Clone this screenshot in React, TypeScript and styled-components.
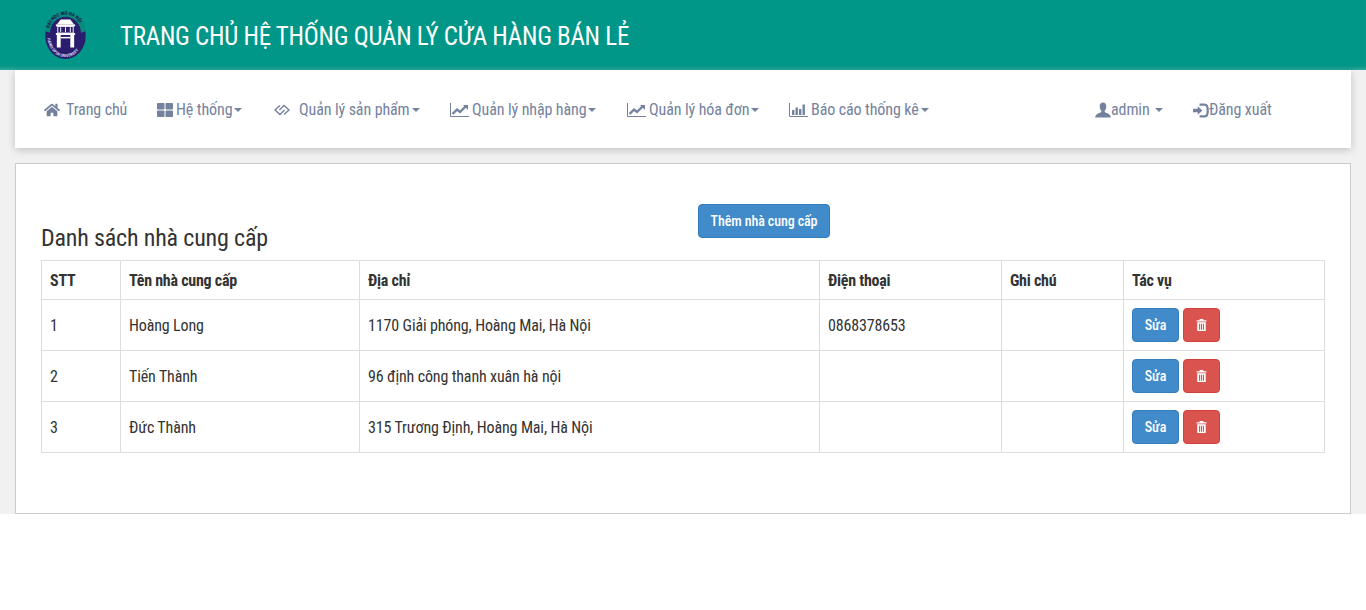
import React from 'react';
import styled, {createGlobalStyle} from 'styled-components';
import {FaHome, FaThLarge} from 'react-icons/fa';

const GlobalStyle = createGlobalStyle`
  html, body {
    margin: 0;
    padding: 0;
    background: #fff;
  }
  body {
    font-family: "Roboto Condensed", Roboto, "Liberation Sans", sans-serif;
    font-stretch: 75%;
    font-size: 16px;
    color: #333;
  }
  * {
    box-sizing: border-box;
  }
`;

function Logo() {
  return (
    <LogoSvg viewBox="0 0 44 52">
      <defs>
        <path id="ring-top" d="M5 22 A17 17 0 0 1 39 22"/>
        <path id="ring-bottom" d="M3 26 C3 40 12 49 22 49 C32 49 41 40 41 26"/>
      </defs>
      <ellipse cx="22" cy="27" rx="21" ry="24" fill="#2a1d6e"/>
      <path d="M1 22 C2 10 10 2 22 2 C34 2 42 10 43 22 L37 24 L7 24 Z" fill="#0b8a7c"/>
      <text fontSize="5" fontWeight="700" fill="#1c1450" fontFamily="Roboto, sans-serif">
        <textPath href="#ring-top" startOffset="6%">ĐẠI HỌC MỞ HÀ NỘI</textPath>
      </text>
      <ellipse cx="22" cy="24" rx="16" ry="17" fill="#2a1d6e"/>
      <path d="M13 15 L17 10 L27 10 L31 15 Z" fill="#fff"/>
      <rect x="12" y="15" width="20" height="2" fill="#fff"/>
      <rect x="14" y="17" width="16" height="7" fill="none" stroke="#fff" strokeWidth="1"/>
      <path d="M17 18 v5 M22 18 v5 M27 18 v5" stroke="#fff" strokeWidth="1"/>
      <rect x="12" y="24" width="20" height="2" fill="#fff"/>
      <rect x="13" y="26" width="4" height="13" fill="#fff"/>
      <rect x="27" y="26" width="4" height="13" fill="#fff"/>
      <rect x="17" y="28" width="10" height="1.5" fill="#fff"/>
      <text fontSize="4.4" fontWeight="700" fill="#cfcbe6" fontFamily="Roboto, sans-serif">
        <textPath href="#ring-bottom" startOffset="5%">HANOI OPEN UNIVERSITY</textPath>
      </text>
    </LogoSvg>
  );
}

function DiamondsIcon() {
  return (
    <NavSvg viewBox="0 0 18 12" $w={18} $h={12}>
      <path d="M7 1.5 L2 6 L7 10.5 L9 8.6 M11 10.5 L16 6 L11 1.5 L9 3.4 M6.4 6 L9 3.4 M11.6 6 L9 8.6" fill="none" stroke="currentColor" strokeWidth="1.4"/>
    </NavSvg>
  );
}

function LineChartIcon() {
  return (
    <NavSvg viewBox="0 0 19 14" $w={19} $h={14}>
      <path d="M0.5 0 V13.5 H19" fill="none" stroke="currentColor" strokeWidth="1"/>
      <path d="M2.5 11 L7 6.5 L10 9 L15.5 3.5" fill="none" stroke="currentColor" strokeWidth="2.4"/>
      <path d="M13 2 H18 V7 Z" fill="currentColor"/>
    </NavSvg>
  );
}

function BarChartIcon() {
  return (
    <NavSvg viewBox="0 0 19 14" $w={19} $h={14}>
      <path d="M0.5 0 V13.5 H19" fill="none" stroke="currentColor" strokeWidth="1"/>
      <path d="M3 7 H5.4 V12 H3 Z M6.5 4.5 H8.9 V12 H6.5 Z M10 6 H12.4 V12 H10 Z M13.5 1.5 H15.9 V12 H13.5 Z" fill="currentColor"/>
    </NavSvg>
  );
}

function UserIcon() {
  return (
    <NavSvg viewBox="0 0 17 16" $w={16} $h={16}>
      <path d="M8.5 0 C11 0 12 2 12 4.2 C12 6.4 11 8.2 10.2 8.9 C10.2 10 10.6 10.6 12.2 11.2 C14.4 12 16.6 12.8 16.8 16 L0.2 16 C0.4 12.8 2.6 12 4.8 11.2 C6.4 10.6 6.8 10 6.8 8.9 C6 8.2 5 6.4 5 4.2 C5 2 6 0 8.5 0 Z" fill="currentColor"/>
    </NavSvg>
  );
}

function LoginIcon() {
  return (
    <NavSvg viewBox="0 0 17 15" $w={16} $h={15}>
      <path d="M0 5.6 H5 V3 L10 7.5 L5 12 V9.4 H0 Z" fill="currentColor"/>
      <path d="M7 1.3 H12.5 C14.6 1.3 15.7 3.2 15.7 7.5 C15.7 11.8 14.6 13.7 12.5 13.7 H7" fill="none" stroke="currentColor" strokeWidth="2.4"/>
    </NavSvg>
  );
}

function TrashIcon() {
  return (
    <svg viewBox="0 0 12 13" width="11" height="12">
      <path d="M4.2 0 H7.8 L8.4 1.2 H11.4 V2.8 H0.6 V1.2 H3.6 Z" fill="currentColor"/>
      <path d="M1.4 3.6 H10.6 V13 H1.4 Z M3.3 5 V11.6 H4.5 V5 Z M5.4 5 V11.6 H6.6 V5 Z M7.5 5 V11.6 H8.7 V5 Z" fill="currentColor" fillRule="evenodd"/>
    </svg>
  );
}

const suppliers = [
  {id: 1, name: 'Hoàng Long', address: '1170 Giải phóng, Hoàng Mai, Hà Nội', phone: '0868378653'},
  {id: 2, name: 'Tiến Thành', address: '96 định công thanh xuân hà nội', phone: ''},
  {id: 3, name: 'Đức Thành', address: '315 Trương Định, Hoàng Mai, Hà Nội', phone: ''},
];

export default function App() {
  return (
    <Page>
      <GlobalStyle/>
      <Header>
        <Logo/>
        <Title>TRANG CHỦ HỆ THỐNG QUẢN LÝ CỬA HÀNG BÁN LẺ</Title>
      </Header>
      <NavBar>
        <NavGroup>
          <NavItem $width={113} $gap={6}><FaHome size={16}/>Trang chủ</NavItem>
          <NavItem $width={116} $gap={3}><FaThLarge size={16}/>Hệ thống<Caret/></NavItem>
          <NavItem $width={177} $gap={8}><DiamondsIcon/>Quản lý sản phẩm<Caret/></NavItem>
          <NavItem $width={177} $gap={3}><LineChartIcon/>Quản lý nhập hàng<Caret/></NavItem>
          <NavItem $width={162} $gap={3}><LineChartIcon/>Quản lý hóa đơn<Caret/></NavItem>
          <NavItem $width={161} $gap={3}><BarChartIcon/>Báo cáo thống kê<Caret/></NavItem>
        </NavGroup>
        <NavGroup>
          <NavItem $width={98} $gap={0}><UserIcon/>admin<Caret $left={5}/></NavItem>
          <NavItem $width={79} $gap={0}><LoginIcon/>Đăng xuất</NavItem>
        </NavGroup>
      </NavBar>
      <Panel>
        <TitleRow>
          <Heading>Danh sách nhà cung cấp</Heading>
          <AddButton>Thêm nhà cung cấp</AddButton>
        </TitleRow>
        <Table>
          <colgroup>
            <col width="79"/>
            <col width="239"/>
            <col width="460"/>
            <col width="182"/>
            <col width="122"/>
            <col width="201"/>
          </colgroup>
          <thead>
            <tr>
              <Th>STT</Th>
              <Th>Tên nhà cung cấp</Th>
              <Th>Địa chỉ</Th>
              <Th>Điện thoại</Th>
              <Th>Ghi chú</Th>
              <Th>Tác vụ</Th>
            </tr>
          </thead>
          <tbody>
            {suppliers.map(item => (
              <tr key={item.id}>
                <Td>{item.id}</Td>
                <Td>{item.name}</Td>
                <Td>{item.address}</Td>
                <Td>{item.phone}</Td>
                <Td/>
                <Td>
                  <Actions>
                    <EditButton>Sửa</EditButton>
                    <DeleteButton><TrashIcon/></DeleteButton>
                  </Actions>
                </Td>
              </tr>
            ))}
          </tbody>
        </Table>
      </Panel>
    </Page>
  );
}

const Page = styled.div`
  height: 514px;
  background: #f1f1f1;
  overflow: hidden;
`;

const Header = styled.header`
  height: 70px;
  background: #009688;
  box-shadow: inset 0 -4px 4px -3px rgba(255, 255, 255, 0.28);
  display: flex;
  align-items: center;
  padding-left: 44px;
`;

const LogoSvg = styled.svg`
  width: 43px;
  height: 50px;
  flex: none;
`;

const Title = styled.h1`
  margin: 2px 0 0 33px;
  font-size: 25px;
  font-weight: 400;
  line-height: 1;
  letter-spacing: -0.27px;
  color: #fff;
`;

const NavBar = styled.nav`
  height: 78px;
  margin: 0 15px;
  padding: 2px 79px 0 29px;
  background: #fff;
  box-shadow: 0 2px 8px rgba(0, 0, 0, 0.2);
  display: flex;
  align-items: center;
  justify-content: space-between;
  position: relative;
`;

const NavGroup = styled.div`
  display: flex;
  align-items: center;
`;

const NavItem = styled.a<{$width: number; $gap: number}>`
  width: ${p => p.$width}px;
  display: flex;
  align-items: center;
  font-size: 16px;
  line-height: 20px;
  letter-spacing: -0.1px;
  color: #74829e;
  white-space: nowrap;

  > svg {
    flex: none;
    margin-right: ${p => p.$gap}px;
  }
`;

const NavSvg = styled.svg<{$w: number; $h: number}>`
  width: ${p => p.$w}px;
  height: ${p => p.$h}px;
`;

const Caret = styled.span<{$left?: number}>`
  width: 0;
  height: 0;
  margin-left: ${p => p.$left ?? 2}px;
  border-top: 4px solid #74829e;
  border-left: 4px solid transparent;
  border-right: 4px solid transparent;
`;

const Panel = styled.section`
  margin: 15px 15px 0;
  height: 351px;
  padding: 40px 25px 0;
  background: #fff;
  border: 1px solid #ccc;
`;

const TitleRow = styled.div`
  height: 56px;
  display: flex;
  align-items: flex-start;
  position: relative;
`;

const Heading = styled.h2`
  margin: 20px 0 0;
  font-size: 24px;
  font-weight: 400;
  line-height: 28px;
  letter-spacing: -0.18px;
  color: #333;
`;

const AddButton = styled.button`
  position: absolute;
  left: 657px;
  top: 0;
  width: 132px;
  height: 34px;
  padding: 0;
  font: inherit;
  font-size: 14px;
  font-weight: 500;
  letter-spacing: -0.1px;
  color: #fff;
  background: #428bca;
  border: 1px solid #357ebd;
  border-radius: 4px;
`;

const Table = styled.table`
  width: 1283px;
  table-layout: fixed;
  border-collapse: collapse;
  color: #333;
`;

const Th = styled.th`
  height: 39px;
  padding: 0 8px;
  border: 1px solid #ddd;
  text-align: left;
  font-size: 16px;
  font-weight: 700;
  letter-spacing: -0.25px;
`;

const Td = styled.td`
  height: 51px;
  padding: 0 8px;
  border: 1px solid #ddd;
  font-size: 16px;
  letter-spacing: -0.14px;
`;

const Actions = styled.div`
  display: flex;
  gap: 4px;
`;

const EditButton = styled.button`
  width: 47px;
  height: 34px;
  padding: 0;
  font: inherit;
  font-size: 14px;
  font-weight: 500;
  color: #fff;
  background: #428bca;
  border: 1px solid #357ebd;
  border-radius: 4px;
`;

const DeleteButton = styled.button`
  width: 37px;
  height: 34px;
  padding: 0;
  color: #fff;
  background: #d9534f;
  border: 1px solid #d43f3a;
  border-radius: 4px;
  display: flex;
  align-items: center;
  justify-content: center;
`;
